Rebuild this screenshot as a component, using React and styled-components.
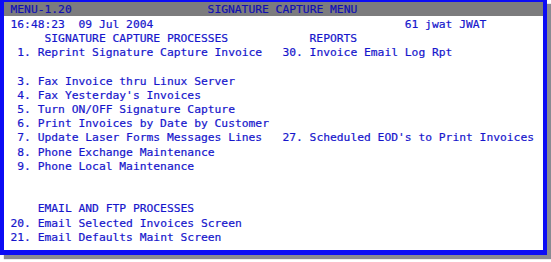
import React from 'react';
import styled, {createGlobalStyle} from 'styled-components';

const GlobalStyle = createGlobalStyle`
  html, body {
    margin: 0;
    padding: 0;
    background: #ffffff;
  }
`;

const Page = styled.div`
  width: 551px;
  height: 262px;
  overflow: hidden;
`;

const Frame = styled.div`
  box-sizing: border-box;
  width: 547px;
  height: 255px;
  border-style: solid;
  border-color: #0c0cf5;
  border-width: 2px 4px 5px 4px;
  background: #ffffff;
  box-shadow: 4px 4px 1px #8a8a92;
  font-family: "DejaVu Sans Mono", "Liberation Mono", monospace;
  font-size: 11.3px;
  color: #1616cc;
  -webkit-text-stroke: 0.2px currentColor;
  display: flex;
  flex-direction: column;
`;

const TitleBar = styled.div`
  height: 14px;
  background: #7c7c7e;
  color: #1010b4;
  padding-left: 6.5px;
  display: flex;
  align-items: center;
  padding-top: 3px;
  box-sizing: border-box;
`;

const Screen = styled.div`
  padding: 1.9px 0 0 6.5px;
`;

const Line = styled.div`
  height: 14.2px;
  line-height: 14.2px;
  display: grid;
  grid-template-columns: repeat(80, 1ch);
  white-space: pre;
`;

const Cell = styled.span`
  grid-row: 1;
  grid-column: ${p => p.$col + 1} / span 1;
`;

const title = [[0, 'MENU-1.20'], [29, 'SIGNATURE CAPTURE MENU']];

const rows = [
  [[0, '16:48:23  09 Jul 2004'], [58, '61 jwat JWAT']],
  [[5, 'SIGNATURE CAPTURE PROCESSES'], [44, 'REPORTS']],
  [[1, '1. Reprint Signature Capture Invoice'], [40, '30. Invoice Email Log Rpt']],
  [],
  [[1, '3. Fax Invoice thru Linux Server']],
  [[1, "4. Fax Yesterday's Invoices"]],
  [[1, '5. Turn ON/OFF Signature Capture']],
  [[1, '6. Print Invoices by Date by Customer']],
  [[1, '7. Update Laser Forms Messages Lines'], [40, "27. Scheduled EOD's to Print Invoices"]],
  [[1, '8. Phone Exchange Maintenance']],
  [[1, '9. Phone Local Maintenance']],
  [],
  [],
  [[4, 'EMAIL AND FTP PROCESSES']],
  [[0, '20. Email Selected Invoices Screen']],
  [[0, '21. Email Defaults Maint Screen']],
];

const Cells = ({items}) => items.map(([col, text]) => (
  <Cell key={col} $col={col}>{text}</Cell>
));

export default function App() {
  return (
    <Page>
      <GlobalStyle/>
      <Frame>
        <TitleBar>
          <Line><Cells items={title}/></Line>
        </TitleBar>
        <Screen>
          {rows.map((items, i) => (
            <Line key={i}><Cells items={items}/></Line>
          ))}
        </Screen>
      </Frame>
    </Page>
  );
}
